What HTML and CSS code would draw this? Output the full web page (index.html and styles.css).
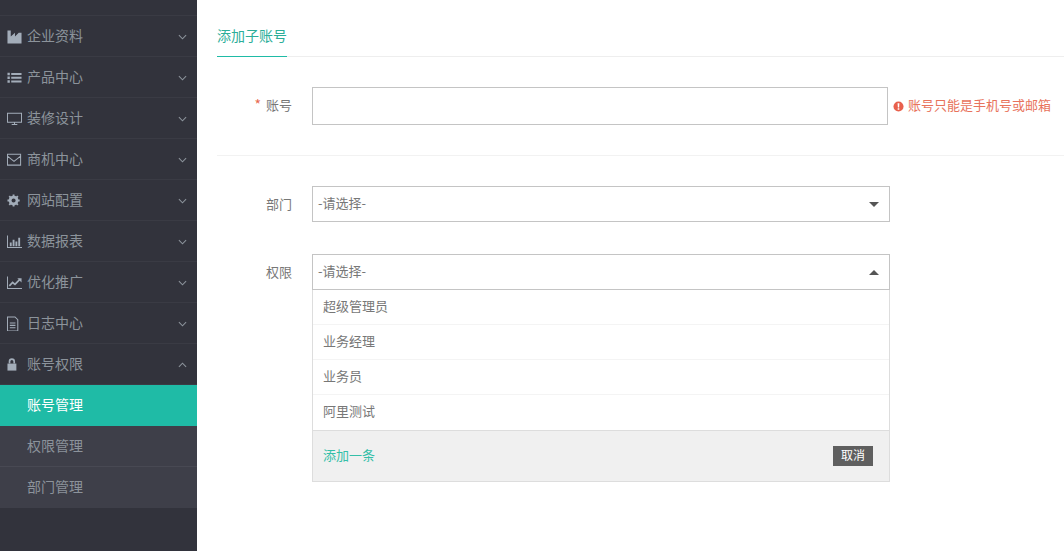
FILE: index.html
```html
<!DOCTYPE html>
<html lang="zh-CN">
<head>
<meta charset="utf-8">
<title>添加子账号</title>
<link rel="stylesheet" href="styles.css">
</head>
<body>
<div class="app">
  <aside class="sidebar">
    <div class="side-top"></div>
    <nav>
      <a class="nav-item"><svg class="ico" viewBox="0 0 16 16"><path class="fill" d="M.5 1.500h3.500v6.500l4.500-4V8l4-4H15.500v11.500H.5z"/></svg><span class="nav-text">企业资料</span><svg class="chev" viewBox="0 0 10 6"><path d="M1 1l4 4 4-4"/></svg></a>
      <a class="nav-item"><svg class="ico" viewBox="0 0 16 16"><path class="fill" d="M.5 3h2.500v2.500H.5zM.5 7h2.500v2.500H.5zM.5 11h2.500v2.500H.5zM4.500 3.200h11v2h-11zM4.500 7.200h11v2h-11zM4.500 11.200h11v2h-11z"/></svg><span class="nav-text">产品中心</span><svg class="chev" viewBox="0 0 10 6"><path d="M1 1l4 4 4-4"/></svg></a>
      <a class="nav-item"><svg class="ico" viewBox="0 0 16 16"><path class="line" d="M.5 2.500h15v9.500H.5zM5 14.500h6M8 12v2.500"/></svg><span class="nav-text">装修设计</span><svg class="chev" viewBox="0 0 10 6"><path d="M1 1l4 4 4-4"/></svg></a>
      <a class="nav-item"><svg class="ico" viewBox="0 0 16 16"><path class="line" d="M.5 2.500h14v11.500h-14zM.5 4.500L7.500 10l7-5.500"/></svg><span class="nav-text">商机中心</span><svg class="chev" viewBox="0 0 10 6"><path d="M1 1l4 4 4-4"/></svg></a>
      <a class="nav-item"><svg class="ico" viewBox="0 0 16 16"><circle class="gear-ring" cx="7" cy="8" r="3.700"/><path class="gear-teeth" d="M7 1.500v13M.5 8h13M2.400 3.400l9.200 9.200M11.600 3.400l-9.200 9.200"/></svg><span class="nav-text">网站配置</span><svg class="chev" viewBox="0 0 10 6"><path d="M1 1l4 4 4-4"/></svg></a>
      <a class="nav-item"><svg class="ico" viewBox="0 0 16 16"><path class="line" d="M.5 1.500v13H16"/><path class="fill" d="M3 9h2v4H3zM6 6h2v7H6zM9 8h2v5H9zM12 4h2v9h-2z"/></svg><span class="nav-text">数据报表</span><svg class="chev" viewBox="0 0 10 6"><path d="M1 1l4 4 4-4"/></svg></a>
      <a class="nav-item"><svg class="ico" viewBox="0 0 16 16"><path class="line" d="M.5 1.500v13H16"/><path class="line thick" d="M2.500 11.500L6 8l2.500 2L14 4.500"/><path class="fill" d="M11 3.500h4.500v4.500z"/></svg><span class="nav-text">优化推广</span><svg class="chev" viewBox="0 0 10 6"><path d="M1 1l4 4 4-4"/></svg></a>
      <a class="nav-item"><svg class="ico" viewBox="0 0 16 16"><path class="line" d="M.5 1h8l3 3v12h-11zM3 7.500h6M3 10h6M3 12.500h6"/></svg><span class="nav-text">日志中心</span><svg class="chev" viewBox="0 0 10 6"><path d="M1 1l4 4 4-4"/></svg></a>
      <a class="nav-item"><svg class="ico" viewBox="0 0 16 16"><path class="fill" d="M.5 7h9.500v7.500H.5z"/><path class="line thick" d="M2.700 7V4.800a2.500 2.500 0 0 1 5 0V7"/></svg><span class="nav-text">账号权限</span><svg class="chev" viewBox="0 0 10 6"><path d="M1 5l4-4 4 4"/></svg></a>
      <div class="sub">
        <a class="sub-item active">账号管理</a>
        <a class="sub-item">权限管理</a>
        <a class="sub-item">部门管理</a>
      </div>
    </nav>
  </aside>
  <main class="main">
    <div class="tabs"><span class="tab">添加子账号</span></div>
    <section class="account-block">
      <div class="row">
        <label class="label"><span class="req">*</span>账号</label>
        <div class="text-input"></div>
        <div class="error"><svg class="err-ico" viewBox="0 0 12 12"><circle cx="6" cy="6" r="5.500"/><path d="M5 2.500h2l-.3 4.500H5.300zM5.100 8h1.800v1.600H5.100z"/></svg><span>账号只能是手机号或邮箱</span></div>
      </div>
    </section>
    <section class="select-block">
      <div class="row select-row">
        <label class="label">部门</label>
        <div class="select"><span>-请选择-</span><i class="caret down"></i></div>
      </div>
      <div class="row select-row">
        <label class="label">权限</label>
        <div class="select-wrap">
          <div class="select open"><span>-请选择-</span><i class="caret up"></i></div>
          <div class="dropdown">
            <div class="option">超级管理员</div>
            <div class="option">业务经理</div>
            <div class="option">业务员</div>
            <div class="option">阿里测试</div>
            <div class="drop-foot"><a class="add">添加一条</a><button class="cancel" type="button">取消</button></div>
          </div>
        </div>
      </div>
    </section>
  </main>
</div>
</body>
</html>
```
FILE: styles.css
```css
* { box-sizing: border-box; }
html, body { margin: 0; height: 100%; overflow: hidden; }
body { font: 13px/20px "Noto Sans CJK SC", "Liberation Sans", sans-serif; color: #777; background: #fff; }
.app { display: flex; height: 551px; }

.sidebar { width: 197px; flex: none; background: #32333c; font-size: 14px; }
.side-top { height: 16px; border-bottom: 1px solid #3a3b44; }
.nav-item { display: flex; align-items: center; height: 41px; padding: 0 10px 0 7px; border-bottom: 1px solid #3a3b44; color: #8c939b; }
.ico { width: 15px; height: 15px; flex: none; margin-right: 5px; }
.fill { fill: #a3adb9; }
.line { fill: none; stroke: #a3adb9; stroke-width: 1.1; }
.line.thick { stroke-width: 1.800; }
.gear-ring { fill: #32333c; stroke: #a3adb9; stroke-width: 3; }
.gear-teeth { stroke: #a3adb9; stroke-width: 2; stroke-dasharray: 2.200 8.600 2.200; }
.nav-text { flex: 1; padding-bottom: 3px; }
.chev { width: 9px; height: 6px; margin-top: 1px; fill: none; stroke: #8c939b; stroke-width: 1.200; }

.sub { background: #3e3f49; }
.sub-item { display: block; height: 41px; line-height: 38px; padding-left: 27px; border-bottom: 1px solid #484953; color: #8c939b; }
.sub-item:last-child { border-bottom: 0; }
.sub-item.active { background: #1fbba6; color: #fff; border-bottom: 0; }

.main { flex: 1; min-width: 0; padding-left: 20px; }
.tabs { height: 57px; border-bottom: 1px solid #eee; font-size: 14px; }
.tab { display: inline-block; height: 57px; line-height: 70px; color: #2cae99; border-bottom: 1px solid #1fbba6; }

.row { display: flex; align-items: flex-start; }
.label { width: 75px; flex: none; margin-right: 20px; text-align: right; color: #777; }
.req { margin-right: 5px; color: #e8694f; font-size: 14px; line-height: 1; }

.account-block { padding: 30px 0; border-bottom: 1px solid #f2f2f2; }
.account-block .label { line-height: 36px; }
.text-input { width: 576px; height: 38px; flex: none; border: 1px solid #c4c4c4; background: #fff; }
.error { display: flex; align-items: center; height: 36px; margin-left: 5px; color: #e8735c; white-space: nowrap; }
.err-ico { width: 11px; height: 11px; margin: 2px 4px 0 0; fill: #e8604c; }
.err-ico path { fill: #fff; }

.select-block { padding-top: 30px; }
.select-row { margin-bottom: 32px; }
.select-row .label { line-height: 36px; }
.select-wrap { width: 578px; flex: none; }
.select { display: flex; align-items: center; justify-content: space-between; width: 578px; height: 36px; padding: 0 10px 2px 5px; border: 1px solid #c4c4c4; background: #fff; color: #777; }
.caret { width: 0; height: 0; margin-top: 2px; border-left: 5px solid transparent; border-right: 5px solid transparent; }
.caret.down { border-top: 5px solid #555; }
.caret.up { border-bottom: 5px solid #555; }

.dropdown { border: 1px solid #ddd; border-top: 0; }
.option { height: 35px; line-height: 32px; padding-left: 10px; border-bottom: 1px solid #f4f4f4; color: #777; }
.option:nth-child(4) { border-bottom: 0; }
.drop-foot { display: flex; align-items: center; justify-content: space-between; height: 51px; padding: 0 16px 2px 10px; border-top: 1px solid #ddd; background: #f0f0f0; }
.add { color: #34bfa8; }
.cancel { width: 40px; height: 20px; margin-top: 2px; padding: 0 0 2px; border: 0; background: #5f5f5f; color: #fff; font: 12px/18px "Noto Sans CJK SC", "Liberation Sans", sans-serif; }
```
